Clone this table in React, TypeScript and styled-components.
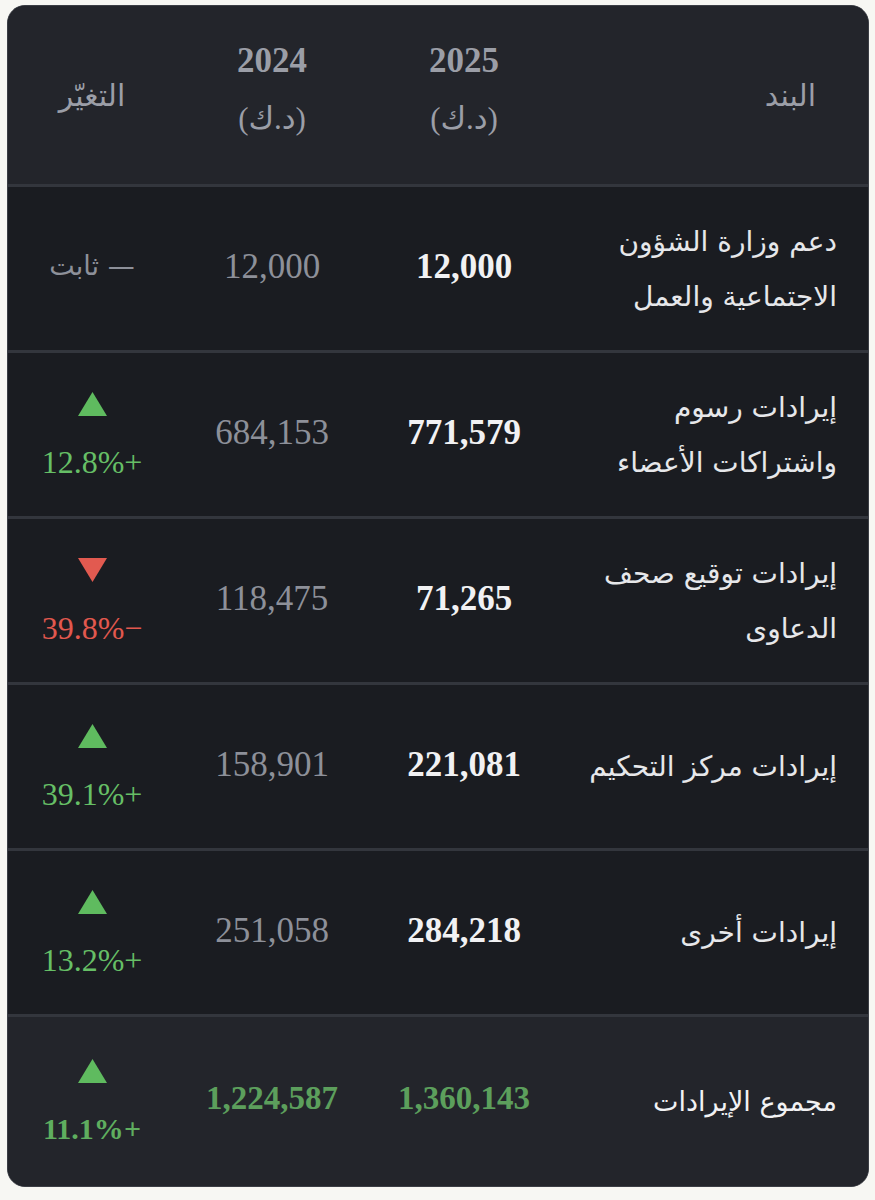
import React from 'react';
import styled, { createGlobalStyle } from 'styled-components';

const Global = createGlobalStyle`
  html, body { margin: 0; padding: 0; background: #f7f7f3; }
  body { font-family: "DejaVu Sans", sans-serif; }
`;

const Page = styled.div`
  padding: 5px 6px 13px 7px;
`;

const Card = styled.div`
  direction: rtl;
  background: #1a1c21;
  border: 1px solid #3b3e45;
  border-radius: 18px;
  overflow: hidden;
`;

type Variant = 'head' | 'body' | 'total';

const Row = styled.div<{ $variant: Variant }>`
  display: grid;
  grid-template-columns: 308px 192px 192px 1fr;
  height: ${(p) => (p.$variant === 'head' ? 178 : p.$variant === 'total' ? 169 : 163)}px;
  background: ${(p) => (p.$variant === 'body' ? '#1a1c21' : '#23252b')};
  border-top: ${(p) => (p.$variant === 'head' ? 'none' : '3px solid #33363d')};
`;

const ItemCell = styled.div<{ $head?: boolean }>`
  display: flex;
  align-items: center;
  justify-content: flex-start;
  padding: 0 ${(p) => (p.$head ? 52 : 31)}px 0 20px;
`;

const Cell = styled.div`
  display: flex;
  flex-direction: column;
  align-items: center;
  justify-content: center;
  text-align: center;
`;

const HeadLabel = styled.span`
  font-family: "DejaVu Sans", sans-serif;
  font-size: 30px;
  color: #9b9ea7;
`;

const YearStack = styled.div`
  display: flex;
  flex-direction: column;
  align-items: center;
  margin-top: -8px;
`;

const Year = styled.span`
  font-family: "Liberation Serif", serif;
  font-weight: 700;
  font-size: 35px;
  line-height: 56px;
  color: #9b9ea7;
`;

const Unit = styled.span`
  font-family: "Liberation Serif", "DejaVu Sans", serif;
  font-weight: 400;
  font-size: 31px;
  line-height: 60px;
  color: #9b9ea7;
`;

const ItemLabel = styled.span<{ $total?: boolean }>`
  font-family: "DejaVu Sans", sans-serif;
  font-size: ${(p) => (p.$total ? 27 : 28)}px;
  line-height: 55px;
  color: ${(p) => (p.$total ? '#f2f2f4' : '#e6e7ea')};
  max-width: 255px;
`;

const Amount = styled.span<{ $tone: 'current' | 'previous' | 'total' }>`
  font-family: "Liberation Serif", serif;
  direction: ltr;
  font-size: ${(p) => (p.$tone === 'total' ? 33 : 35)}px;
  font-weight: ${(p) => (p.$tone === 'previous' ? 400 : 700)};
  color: ${(p) =>
    p.$tone === 'current' ? '#f1f1f3' : p.$tone === 'previous' ? '#8d9099' : '#5c9f5c'};
  margin-top: ${(p) => (p.$tone === 'total' ? -6 : -4)}px;
`;

const ChangeStack = styled.div`
  display: flex;
  flex-direction: column;
  align-items: center;
  gap: 30px;
`;

const Pct = styled.span<{ $dir: 'up' | 'down'; $bold?: boolean }>`
  font-family: "Liberation Serif", serif;
  font-size: ${(p) => (p.$bold ? 30 : 32)}px;
  font-weight: ${(p) => (p.$bold ? 700 : 400)};
  line-height: 32px;
  color: ${(p) => (p.$dir === 'up' ? (p.$bold ? '#5fae5f' : '#66bf66') : '#e2584e')};
`;

const Flat = styled.span`
  font-family: "DejaVu Sans", sans-serif;
  font-size: 27px;
  color: #8d9099;
  margin-top: -6px;
`;

const Tri = ({ dir }: { dir: 'up' | 'down' }) => (
  <svg width="29" height="24" viewBox="0 0 29 24">
    {dir === 'up' ? (
      <polygon points="14.5,0 29,24 0,24" fill="#5fbb5f" />
    ) : (
      <polygon points="0,0 29,0 14.5,24" fill="#e25a50" />
    )}
  </svg>
);

type Item = {
  label: string;
  cur: string;
  prev: string;
  change: { dir: 'up' | 'down'; text: string } | null;
};

const items: Item[] = [
  { label: 'دعم وزارة الشؤون الاجتماعية والعمل', cur: '12,000', prev: '12,000', change: null },
  { label: 'إيرادات رسوم واشتراكات الأعضاء', cur: '771,579', prev: '684,153', change: { dir: 'up', text: '+12.8%' } },
  { label: 'إيرادات توقيع صحف الدعاوى', cur: '71,265', prev: '118,475', change: { dir: 'down', text: '\u221239.8%' } },
  { label: 'إيرادات مركز التحكيم', cur: '221,081', prev: '158,901', change: { dir: 'up', text: '+39.1%' } },
  { label: 'إيرادات أخرى', cur: '284,218', prev: '251,058', change: { dir: 'up', text: '+13.2%' } },
];

export default function App() {
  return (
    <>
      <Global />
      <Page>
        <Card>
          <Row $variant="head">
            <ItemCell $head>
              <HeadLabel>البند</HeadLabel>
            </ItemCell>
            <Cell>
              <YearStack>
                <Year>2025</Year>
                <Unit>(د.ك)</Unit>
              </YearStack>
            </Cell>
            <Cell>
              <YearStack>
                <Year>2024</Year>
                <Unit>(د.ك)</Unit>
              </YearStack>
            </Cell>
            <Cell>
              <HeadLabel>التغيّر</HeadLabel>
            </Cell>
          </Row>
          {items.map((it) => (
            <Row $variant="body" key={it.label}>
              <ItemCell>
                <ItemLabel>{it.label}</ItemLabel>
              </ItemCell>
              <Cell>
                <Amount $tone="current">{it.cur}</Amount>
              </Cell>
              <Cell>
                <Amount $tone="previous">{it.prev}</Amount>
              </Cell>
              <Cell>
                {it.change ? (
                  <ChangeStack>
                    <Tri dir={it.change.dir} />
                    <Pct $dir={it.change.dir}>{it.change.text}</Pct>
                  </ChangeStack>
                ) : (
                  <Flat>— ثابت</Flat>
                )}
              </Cell>
            </Row>
          ))}
          <Row $variant="total">
            <ItemCell>
              <ItemLabel $total>مجموع الإيرادات</ItemLabel>
            </ItemCell>
            <Cell>
              <Amount $tone="total">1,360,143</Amount>
            </Cell>
            <Cell>
              <Amount $tone="total">1,224,587</Amount>
            </Cell>
            <Cell>
              <ChangeStack>
                <Tri dir="up" />
                <Pct $dir="up" $bold>+11.1%</Pct>
              </ChangeStack>
            </Cell>
          </Row>
        </Card>
      </Page>
    </>
  );
}
